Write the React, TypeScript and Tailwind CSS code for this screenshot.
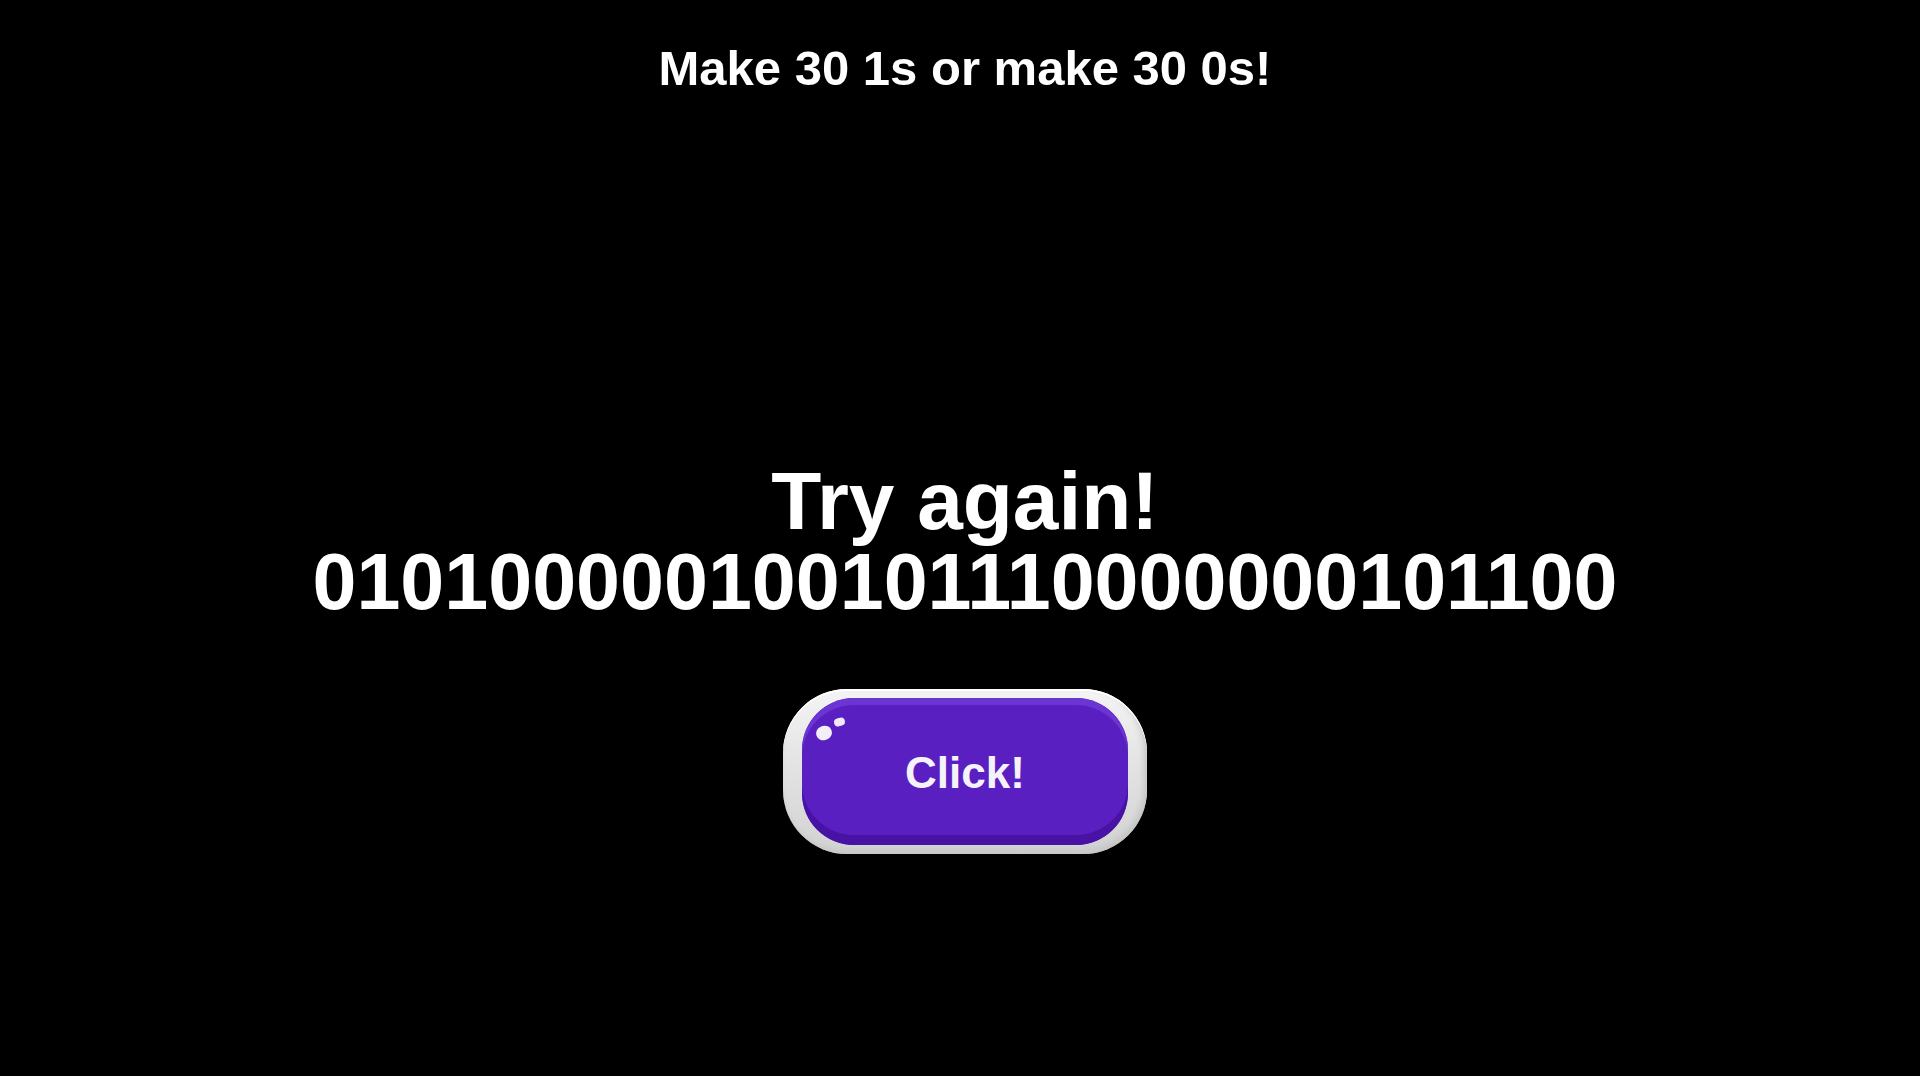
import React from "react";

export default function App() {
  return (
    <div
      className="w-[1920px] h-[1076px] bg-black flex flex-col items-center text-white overflow-hidden pl-[10px]"
      style={{ fontFamily: '"Liberation Sans", Arial, sans-serif' }}
    >
      <div className="pt-[44px] text-[49px] leading-none font-bold text-center">
        Make 30 1s or make 30 0s!
      </div>
      <div className="mt-[367px] flex flex-col items-center font-bold text-[82px] leading-none">
        <div className="leading-[82px]">Try again!</div>
        <div className="text-[79px] leading-[80px]">010100000100101110000000101100</div>
      </div>
      <div className="mt-[67px] w-[364px] h-[165px] rounded-[64px] bg-[linear-gradient(180deg,#f4f4f4_0%,#e2e2e2_50%,#d2d2d2_100%)] pl-[19px] pr-[19px] pt-[9px] pb-[9px] shadow-[inset_0_2px_0_#ffffff,inset_-3px_-3px_6px_#c4c4c4]">
        <div className="relative w-full h-full rounded-[52px] bg-[#5a1fc0] shadow-[inset_0_-10px_0_#4813a4,inset_0_7px_0_#6a35d2] flex items-center justify-center">
          <div className="absolute left-[14px] top-[28px] w-[16px] h-[14px] rounded-full bg-[#f3effa] rotate-[-20deg]" />
          <div className="absolute left-[32px] top-[20px] w-[11px] h-[8px] rounded-full bg-[#efe9f8] rotate-[-15deg]" />
          <span className="text-[44px] font-bold text-[#f6f2fb] leading-none mt-[2px]">Click!</span>
        </div>
      </div>
    </div>
  );
}
